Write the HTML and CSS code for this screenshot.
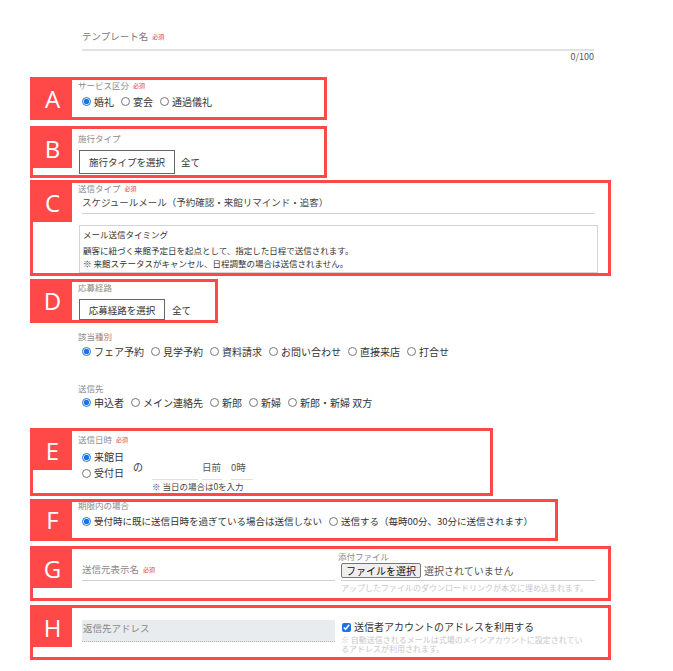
FILE: index.html
```html
<!DOCTYPE html>
<html lang="ja">
<head>
  <meta charset="UTF-8" />
  <meta name="viewport" content="width=device-width, initial-scale=1.0" />
  <title>テンプレート編集</title>
  <link rel="stylesheet" href="styles.css">
</head>
<body>
  <main class="form">
    <div class="text-field">
      <div class="text-field-input">テンプレート名<span class="req">必須</span></div>
      <div class="counter">0/100</div>
    </div>

    <!-- A: service -->
    <section class="mark mark-a">
      <div class="mark-tag">A</div>
      <div class="mark-body">
        <div class="field-label">サービス区分<span class="req">必須</span></div>
        <div class="radio-row">
          <label class="radio"><input type="radio" name="service" checked>婚礼</label>
          <label class="radio"><input type="radio" name="service">宴会</label>
          <label class="radio"><input type="radio" name="service">通過儀礼</label>
        </div>
      </div>
    </section>

    <!-- B: ceremony type -->
    <section class="mark mark-b">
      <div class="mark-tag">B</div>
      <div class="mark-body">
        <div class="field-label">施行タイプ</div>
        <div class="pick-row">
          <button class="pick-btn">施行タイプを選択</button>
          <span class="pick-value">全て</span>
        </div>
      </div>
    </section>

    <!-- C: send type -->
    <section class="mark mark-c">
      <div class="mark-tag">C</div>
      <div class="mark-body">
        <div class="field-label">送信タイプ<span class="req">必須</span></div>
        <div class="select-line">スケジュールメール（予約確認・来館リマインド・追客）</div>
        <div class="info-box">
          <div class="info-title">メール送信タイミング</div>
          <p>顧客に紐づく来館予定日を起点として、指定した日程で送信されます。</p>
          <p>※ 来館ステータスがキャンセル、日程調整の場合は送信されません。</p>
        </div>
      </div>
    </section>

    <!-- D: route -->
    <section class="mark mark-d">
      <div class="mark-tag">D</div>
      <div class="mark-body">
        <div class="field-label">応募経路</div>
        <div class="pick-row">
          <button class="pick-btn pick-btn-d">応募経路を選択</button>
          <span class="pick-value">全て</span>
        </div>
      </div>
    </section>

    <div class="plain-field first">
      <div class="field-label">該当種別</div>
      <div class="radio-row">
        <label class="radio"><input type="radio" name="kind" checked>フェア予約</label>
        <label class="radio"><input type="radio" name="kind">見学予約</label>
        <label class="radio"><input type="radio" name="kind">資料請求</label>
        <label class="radio"><input type="radio" name="kind">お問い合わせ</label>
        <label class="radio"><input type="radio" name="kind">直接来店</label>
        <label class="radio"><input type="radio" name="kind">打合せ</label>
      </div>
    </div>

    <div class="plain-field second">
      <div class="field-label">送信先</div>
      <div class="radio-row">
        <label class="radio"><input type="radio" name="to" checked>申込者</label>
        <label class="radio"><input type="radio" name="to">メイン連絡先</label>
        <label class="radio"><input type="radio" name="to">新郎</label>
        <label class="radio"><input type="radio" name="to">新婦</label>
        <label class="radio"><input type="radio" name="to">新郎・新婦 双方</label>
      </div>
    </div>

    <!-- E: send date -->
    <section class="mark mark-e">
      <div class="mark-tag">E</div>
      <div class="mark-body">
        <div class="field-label">送信日時<span class="req">必須</span></div>
        <div class="date-row">
          <div class="date-base">
            <label class="radio"><input type="radio" name="base" checked>来館日</label>
            <label class="radio"><input type="radio" name="base">受付日</label>
          </div>
          <span class="date-of">の</span>
          <div class="date-inputs">
            <div class="date-fields">
              <span class="date-field days"></span>
              <span class="date-field unit">日前</span>
              <span class="date-field hour">0時</span>
            </div>
            <div class="date-note">※ 当日の場合は0を入力</div>
          </div>
        </div>
      </div>
    </section>

    <!-- F: overdue -->
    <section class="mark mark-f">
      <div class="mark-tag">F</div>
      <div class="mark-body">
        <div class="field-label">期限内の場合</div>
        <div class="radio-row">
          <label class="radio"><input type="radio" name="late" checked>受付時に既に送信日時を過ぎている場合は送信しない</label>
          <label class="radio"><input type="radio" name="late">送信する（毎時00分、30分に送信されます）</label>
        </div>
      </div>
    </section>

    <!-- G: sender name / attachment -->
    <section class="mark mark-g">
      <div class="mark-tag">G</div>
      <div class="mark-body split">
        <div class="col-left">
          <div class="line-input">送信元表示名<span class="req">必須</span></div>
        </div>
        <div class="col-right">
          <div class="field-label">添付ファイル</div>
          <div class="file-row">
            <span class="file-btn">ファイルを選択</span>
            <span class="file-name">選択されていません</span>
          </div>
          <div class="hint">アップしたファイルのダウンロードリンクが本文に埋め込まれます。</div>
        </div>
      </div>
    </section>

    <!-- H: reply address -->
    <section class="mark mark-h">
      <div class="mark-tag">H</div>
      <div class="mark-body split">
        <div class="col-left">
          <div class="disabled-input">返信先アドレス</div>
        </div>
        <div class="col-right">
          <label class="check-row"><input type="checkbox" checked>送信者アカウントのアドレスを利用する</label>
          <div class="hint hint-wrap">※ 自動送信されるメールは式場のメインアカウントに設定されているアドレスが利用されます。</div>
        </div>
      </div>
    </section>
  </main>
</body>
</html>
```

FILE: styles.css
```css
:root {
  --mark: #ff4848;
  --label: #8a8a8a;
  --text: #333;
  --line: #d0d0d0;
  --hint: #c8c8c8;
}

* {
  box-sizing: border-box;
}

body {
  margin: 0;
  font-family: "Noto Sans CJK JP", "Noto Sans", sans-serif;
  font-size: 10px;
  color: var(--text);
  background: #fff;
}

p {
  margin: 0;
}

.form {
  margin-left: 78px;
  width: 516px;
  padding-bottom: 8px;
}

.req {
  color: #e53935;
  font-size: 6px;
  line-height: 1;
  margin-left: 4px;
  vertical-align: 1px;
}

.field-label {
  font-size: 8.5px;
  line-height: 10px;
  color: var(--label);
}

/* template name */
.text-field {
  padding-top: 28px;
}

.text-field-input {
  font-size: 9.5px;
  line-height: 16px;
  color: #777;
  margin-left: 4px;
  padding-bottom: 5px;
  border-bottom: 2px solid #e2e2e2;
}

.counter {
  font-size: 9px;
  line-height: 12px;
  color: #555;
  text-align: right;
}

/* annotation boxes */
.mark {
  display: flex;
  margin-left: -48px;
  border: 3px solid var(--mark);
}

.mark-tag {
  flex: none;
  width: 39px;
  max-height: 39px;
  background: var(--mark);
  color: #fff;
  font-family: "Open Sans", sans-serif;
  font-size: 24px;
  line-height: 1;
  display: flex;
  align-items: center;
  justify-content: center;
}

.mark-body {
  flex: 1;
  min-width: 0;
  padding-left: 6px;
}

.mark-a { width: 297px; margin-top: 14px; }
.mark-b { width: 297px; margin-top: 6px; }
.mark-c { width: 581px; margin-top: 2px; }
.mark-d { width: 188px; margin-top: 3px; }
.mark-e { width: 463px; margin-top: 18px; }
.mark-f { width: 528px; margin-top: 3px; }
.mark-g { width: 581px; margin-top: 5px; }
.mark-h { width: 581px; margin-top: 4px; }

/* radios */
.radio-row {
  display: flex;
  flex-wrap: wrap;
  line-height: 15px;
  font-size: 10px;
}

.radio {
  display: inline-flex;
  align-items: center;
  margin-right: 3px;
  white-space: nowrap;
}

.radio input {
  width: 9px;
  height: 9px;
  margin: 0 3px 0 4px;
  accent-color: #1a73e8;
}

.mark-a .field-label {
  line-height: 11px;
}

.mark-a .radio-row {
  margin-top: 3px;
  padding-bottom: 8px;
}

/* pick buttons */
.mark-b .field-label {
  padding-top: 3px;
  line-height: 12px;
}

.pick-row {
  display: flex;
  align-items: center;
  margin-top: 6px;
  padding-bottom: 1px;
}

.pick-btn {
  height: 24px;
  width: 96px;
  margin-left: 1px;
  padding: 0;
  border: 1px solid #666;
  background: #fff;
  font: inherit;
  font-size: 9.5px;
  color: var(--text);
}

.pick-value {
  margin-left: 6px;
  font-size: 9.5px;
}

.mark-d .pick-row {
  margin-top: 7px;
  padding-bottom: 0;
}

.pick-btn-d {
  height: 21px;
  width: 86px;
}

.mark-d .pick-value {
  margin-left: 7px;
}

/* send type */
.select-line {
  margin: 1px 14px 0 4px;
  font-size: 9.5px;
  line-height: 16px;
  color: #444;
  padding-bottom: 3px;
  border-bottom: 1px solid var(--line);
}

.info-box {
  margin: 11px 10px 0 1px;
  border: 1px solid #d4d4d4;
  padding: 2px 3px;
  font-size: 8.5px;
  line-height: 13px;
}

.info-title {
  line-height: 12px;
  margin-bottom: 4px;
}

/* plain fields */
.plain-field .field-label {
  line-height: 12px;
}

.plain-field .radio-row {
  margin-top: 2px;
}

.plain-field.first {
  margin-top: 7px;
}

.plain-field.second {
  margin-top: 23px;
}

.plain-field.second .radio-row {
  margin-top: 1px;
}

/* send date */
.mark-e .field-label {
  padding-top: 2px;
  line-height: 12px;
}

.date-row {
  display: flex;
  margin-top: 4px;
  padding-bottom: 1px;
}

.date-base {
  width: 55px;
  display: flex;
  flex-direction: column;
  line-height: 16px;
}

.date-of {
  width: 19px;
  margin-top: 10px;
  line-height: 16px;
}

.date-fields {
  display: flex;
  gap: 4px;
}

.date-field {
  height: 31px;
  padding-top: 10px;
  line-height: 16px;
  border-bottom: 1px solid #e0e0e0;
  color: #555;
  font-size: 9.5px;
  white-space: nowrap;
}

.date-field.days { width: 46px; }
.date-field.unit { width: 20px; }
.date-field.hour { width: 22px; margin-left: 5px; }

.date-note {
  font-size: 8.5px;
  line-height: 12px;
  color: #444;
}

/* overdue */
.mark-f .field-label {
  margin-top: -2px;
}

.mark-f .radio-row {
  flex-wrap: nowrap;
  margin-top: 4px;
  padding-bottom: 9px;
  font-size: 9.5px;
}

/* two column rows */
.split {
  display: grid;
  grid-template-columns: 257px 257px;
  column-gap: 3px;
}

.line-input {
  margin: 12px 0 0 4px;
  font-size: 9.5px;
  line-height: 16px;
  color: var(--label);
  padding-bottom: 3px;
  border-bottom: 1px solid var(--line);
}

.col-right .field-label {
  padding-top: 1px;
  line-height: 12px;
}

.file-row {
  display: flex;
  align-items: center;
  margin-left: 3px;
  height: 19px;
  padding-bottom: 2px;
  border-bottom: 1px solid var(--line);
}

.file-btn {
  height: 15px;
  padding: 0 4px;
  border: 1px solid #777;
  border-radius: 2px;
  background: #efefef;
  font-size: 10px;
  line-height: 13px;
  color: #111;
}

.file-name {
  margin-left: 3px;
  font-size: 10px;
  color: #555;
}

.hint {
  margin: 1px 0 4px 3px;
  font-size: 8px;
  line-height: 12px;
  color: var(--hint);
  white-space: nowrap;
}

.disabled-input {
  margin: 12px 0 15px 4px;
  height: 22px;
  padding-left: 1px;
  background: #e9ecef;
  border-bottom: 1px dotted #b5b5b5;
  font-size: 9.5px;
  line-height: 16px;
  color: #888;
}

.check-row {
  display: flex;
  align-items: center;
  margin: 13px 0 0 3px;
  font-size: 10px;
  line-height: 12px;
}

.check-row input {
  width: 9px;
  height: 9px;
  margin: 0 3px 0 1px;
  accent-color: #1a73e8;
}

.hint-wrap {
  width: 245px;
  margin: 3px 0 4px 3px;
  font-size: 8px;
  line-height: 8.5px;
  white-space: normal;
}
```
